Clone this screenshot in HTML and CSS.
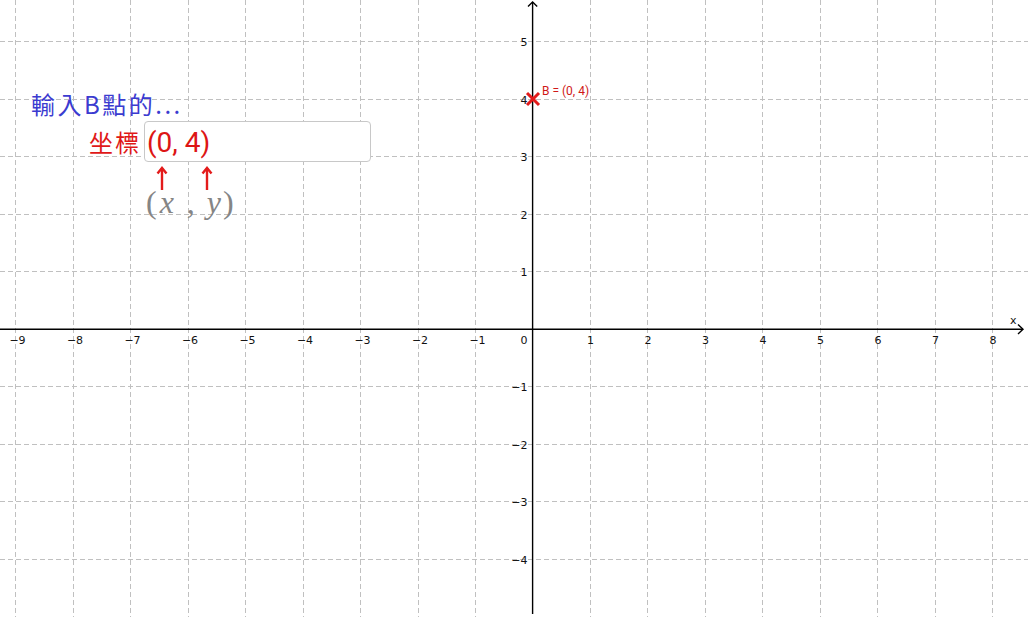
FILE: index.html
```html
<!DOCTYPE html>
<html lang="zh-Hant">
<head>
<meta charset="utf-8">
<title>輸入B點的坐標</title>
<link rel="stylesheet" href="styles.css">
</head>
<body>
<div class="stage">
  <svg class="graph" width="1028" height="617" viewBox="0 0 1028 617" xmlns="http://www.w3.org/2000/svg">
    <g class="grid">
      <line x1="15.5" y1="0" x2="15.5" y2="617"/>
      <line x1="73.5" y1="0" x2="73.5" y2="617"/>
      <line x1="130.5" y1="0" x2="130.5" y2="617"/>
      <line x1="188.5" y1="0" x2="188.5" y2="617"/>
      <line x1="245.5" y1="0" x2="245.5" y2="617"/>
      <line x1="303.5" y1="0" x2="303.5" y2="617"/>
      <line x1="360.5" y1="0" x2="360.5" y2="617"/>
      <line x1="418.5" y1="0" x2="418.5" y2="617"/>
      <line x1="475.5" y1="0" x2="475.5" y2="617"/>
      <line x1="590.5" y1="0" x2="590.5" y2="617"/>
      <line x1="647.5" y1="0" x2="647.5" y2="617"/>
      <line x1="705.5" y1="0" x2="705.5" y2="617"/>
      <line x1="762.5" y1="0" x2="762.5" y2="617"/>
      <line x1="820.5" y1="0" x2="820.5" y2="617"/>
      <line x1="877.5" y1="0" x2="877.5" y2="617"/>
      <line x1="935.5" y1="0" x2="935.5" y2="617"/>
      <line x1="992.5" y1="0" x2="992.5" y2="617"/>
      <line x1="0" y1="41.5" x2="1028" y2="41.5"/>
      <line x1="0" y1="99.5" x2="1028" y2="99.5"/>
      <line x1="0" y1="156.5" x2="1028" y2="156.5"/>
      <line x1="0" y1="214.5" x2="1028" y2="214.5"/>
      <line x1="0" y1="271.5" x2="1028" y2="271.5"/>
      <line x1="0" y1="386.5" x2="1028" y2="386.5"/>
      <line x1="0" y1="444.5" x2="1028" y2="444.5"/>
      <line x1="0" y1="501.5" x2="1028" y2="501.5"/>
      <line x1="0" y1="559.5" x2="1028" y2="559.5"/>
    </g>
    <g class="axes">
      <line x1="0" y1="329.3" x2="1023" y2="329.3"/>
      <line x1="532.6" y1="2" x2="532.6" y2="614"/>
      <polyline points="1018,324.5 1023,329.3 1018,334"/>
      <polyline points="528,6.5 532.6,2 537.2,6.5"/>
    </g>
    <g class="xlabels">
      <text x="17.5" y="343.5">−9</text>
      <text x="75" y="343.5">−8</text>
      <text x="132.5" y="343.5">−7</text>
      <text x="190" y="343.5">−6</text>
      <text x="247.5" y="343.5">−5</text>
      <text x="305" y="343.5">−4</text>
      <text x="362.5" y="343.5">−3</text>
      <text x="420" y="343.5">−2</text>
      <text x="477.5" y="343.5">−1</text>
      <text x="590.5" y="343.5">1</text>
      <text x="648" y="343.5">2</text>
      <text x="705.5" y="343.5">3</text>
      <text x="763" y="343.5">4</text>
      <text x="820.5" y="343.5">5</text>
      <text x="878" y="343.5">6</text>
      <text x="935.5" y="343.5">7</text>
      <text x="993" y="343.5">8</text>
    </g>
    <g class="ylabels">
      <text x="527.5" y="343.5">0</text>
      <text x="527.5" y="46">5</text>
      <text x="527.5" y="103.5">4</text>
      <text x="527.5" y="161">3</text>
      <text x="527.5" y="218.5">2</text>
      <text x="527.5" y="276">1</text>
      <text x="527.5" y="391">−1</text>
      <text x="527.5" y="448.5">−2</text>
      <text x="527.5" y="506">−3</text>
      <text x="527.5" y="563.5">−4</text>
    </g>
    <text class="axisname" x="1010" y="324">x</text>
    <g class="point">
      <line x1="527" y1="93" x2="539" y2="105"/>
      <line x1="539" y1="93" x2="527" y2="105"/>
    </g>
    <text class="pointlabel" x="542" y="94.5">B = (0, 4)</text>
    <g class="arrows">
      <line x1="162" y1="168" x2="162" y2="190"/>
      <polyline points="157.5,173.5 162,168 166.5,173.5"/>
      <line x1="207" y1="168" x2="207" y2="190"/>
      <polyline points="202.5,173.5 207,168 211.5,173.5"/>
    </g>
  </svg>

  <div class="caption">輸入B點的...</div>
  <div class="field">
    <span class="field-label">坐標</span>
    <div class="field-box">(0, 4)</div>
  </div>
  <div class="math"><span class="paren">(</span><i class="var-x">x</i><span class="comma">,</span><i class="var-y">y</i><span class="paren">)</span></div>
</div>
</body>
</html>
```
FILE: styles.css
```css
html, body {
  margin: 0;
  padding: 0;
  background: #ffffff;
}

.stage {
  position: relative;
  width: 1028px;
  height: 617px;
  overflow: hidden;
  background: #ffffff;
}

.graph {
  position: absolute;
  left: 0;
  top: 0;
  display: block;
}

.grid line {
  stroke: #c0c0c0;
  stroke-width: 1;
  stroke-dasharray: 5 3;
}

.axes line,
.axes polyline {
  stroke: #000000;
  stroke-width: 1.4;
  fill: none;
}

.xlabels text {
  font-family: "DejaVu Sans", sans-serif;
  font-size: 11px;
  fill: #111111;
  text-anchor: middle;
}

.ylabels text {
  font-family: "DejaVu Sans", sans-serif;
  font-size: 11px;
  fill: #111111;
  text-anchor: end;
}

.axisname {
  font-family: "DejaVu Sans", sans-serif;
  font-size: 11px;
  fill: #111111;
}

.point line {
  stroke: #e31b1b;
  stroke-width: 3;
  stroke-linecap: butt;
}

.pointlabel {
  font-family: "Roboto", "DejaVu Sans", sans-serif;
  font-size: 12px;
  fill: #d01818;
}

.arrows line,
.arrows polyline {
  stroke: #e31b1b;
  stroke-width: 2.4;
  fill: none;
}

.caption {
  position: absolute;
  left: 31px;
  top: 88px;
  font-family: "Noto Sans CJK TC", "Noto Sans CJK SC", sans-serif;
  font-size: 24px;
  line-height: 32px;
  letter-spacing: 2.5px;
  color: #3b3bd0;
  white-space: nowrap;
}

.field {
  position: absolute;
  left: 89px;
  top: 121px;
  display: flex;
  align-items: center;
  gap: 3px;
}

.field-label {
  font-family: "Noto Sans CJK TC", "Noto Sans CJK SC", sans-serif;
  font-size: 24px;
  line-height: 41px;
  letter-spacing: 2px;
  color: #e01818;
  white-space: nowrap;
}

.field-box {
  box-sizing: border-box;
  width: 227px;
  height: 41px;
  border: 1px solid #c8c8c8;
  border-radius: 4px;
  background: #ffffff;
  padding: 4px 0 0 2px;
  font-family: "Roboto", "Liberation Sans", sans-serif;
  font-size: 28px;
  line-height: 34px;
  color: #dd1515;
  white-space: nowrap;
}

.math {
  position: absolute;
  left: 146px;
  top: 181px;
  display: flex;
  align-items: baseline;
  font-family: "Liberation Serif", "DejaVu Serif", serif;
  font-size: 32px;
  line-height: 42px;
  color: #858585;
  white-space: nowrap;
}

.math i {
  font-style: italic;
}

.math .var-x {
  margin-left: 3px;
}

.math .comma {
  margin-left: 13px;
  margin-right: 12px;
}

.math .var-y {
  margin-right: 2px;
}
```
